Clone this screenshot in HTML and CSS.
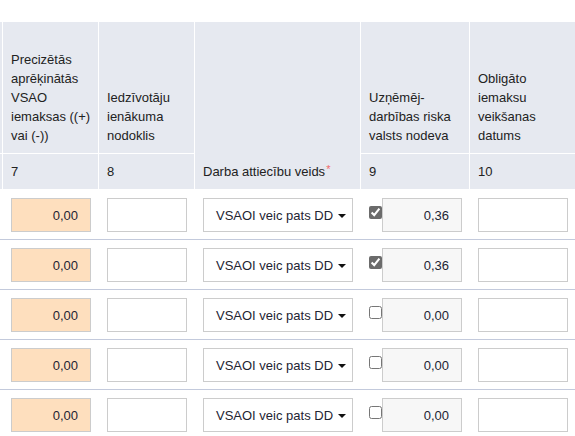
FILE: index.html
```html
<!DOCTYPE html>
<html lang="lv">
<head>
<meta charset="utf-8">
<title>VSAOI</title>
<link rel="stylesheet" href="styles.css">
</head>
<body>
<div class="wrap">
<table class="grid">
  <colgroup>
    <col class="c0"><col class="c1"><col class="c2"><col class="c3"><col class="c4"><col class="c5">
  </colgroup>
  <thead>
    <tr class="head-top">
      <th></th>
      <th>Precizētās aprēķinātās VSAO iemaksas ((+) vai (-))</th>
      <th>Iedzīvotāju ienākuma nodoklis</th>
      <th rowspan="2">Darba attiecību veids<span class="req">*</span></th>
      <th>Uzņēmēj-darbības riska valsts nodeva</th>
      <th>Obligāto iemaksu veikšanas datums</th>
    </tr>
    <tr class="head-num">
      <th></th>
      <th>7</th>
      <th>8</th>
      <th>9</th>
      <th>10</th>
    </tr>
  </thead>
  <tbody>
    <tr>
      <td></td>
      <td><input class="field num peach" type="text" value="0,00"></td>
      <td><input class="field" type="text"></td>
      <td><div class="select"><span>VSAOI veic pats DD</span><i class="caret"></i></div></td>
      <td><div class="risk"><input class="check" type="checkbox" checked><input class="field num ro" type="text" value="0,36" readonly></div></td>
      <td><input class="field wide" type="text"></td>
    </tr>
    <tr>
      <td></td>
      <td><input class="field num peach" type="text" value="0,00"></td>
      <td><input class="field" type="text"></td>
      <td><div class="select"><span>VSAOI veic pats DD</span><i class="caret"></i></div></td>
      <td><div class="risk"><input class="check" type="checkbox" checked><input class="field num ro" type="text" value="0,36" readonly></div></td>
      <td><input class="field wide" type="text"></td>
    </tr>
    <tr>
      <td></td>
      <td><input class="field num peach" type="text" value="0,00"></td>
      <td><input class="field" type="text"></td>
      <td><div class="select"><span>VSAOI veic pats DD</span><i class="caret"></i></div></td>
      <td><div class="risk"><input class="check" type="checkbox"><input class="field num ro" type="text" value="0,00" readonly></div></td>
      <td><input class="field wide" type="text"></td>
    </tr>
    <tr>
      <td></td>
      <td><input class="field num peach" type="text" value="0,00"></td>
      <td><input class="field" type="text"></td>
      <td><div class="select"><span>VSAOI veic pats DD</span><i class="caret"></i></div></td>
      <td><div class="risk"><input class="check" type="checkbox"><input class="field num ro" type="text" value="0,00" readonly></div></td>
      <td><input class="field wide" type="text"></td>
    </tr>
    <tr>
      <td></td>
      <td><input class="field num peach" type="text" value="0,00"></td>
      <td><input class="field" type="text"></td>
      <td><div class="select"><span>VSAOI veic pats DD</span><i class="caret"></i></div></td>
      <td><div class="risk"><input class="check" type="checkbox"><input class="field num ro" type="text" value="0,00" readonly></div></td>
      <td><input class="field wide" type="text"></td>
    </tr>
  </tbody>
</table>
</div>
</body>
</html>
```

FILE: styles.css
```css
html, body {
  margin: 0;
  padding: 0;
  background: #fff;
  overflow: hidden;
}
body {
  font-family: "Liberation Sans", Arial, sans-serif;
  font-size: 13px;
  line-height: 19px;
  color: #222;
}
.wrap {
  padding-top: 22px;
}
.grid {
  table-layout: fixed;
  width: 577px;
  border-collapse: separate;
  border-spacing: 0;
}
.c0 { width: 3px; }
.c1 { width: 96px; }
.c2 { width: 96px; }
.c3 { width: 166px; }
.c4 { width: 109px; }
.c5 { width: 107px; }

.grid th {
  background: #e6e9f0;
  font-weight: normal;
  text-align: left;
  vertical-align: bottom;
  padding: 8px 7px 8px 8px;
  border-right: 1px solid #fff;
  border-bottom: 1px solid #fff;
  color: #222;
}
.grid th:first-child {
  padding: 0;
}
.head-top th {
  height: 115px;
}
.req {
  color: #f06a6a;
  font-size: 11px;
  vertical-align: 3px;
  line-height: 0;
  margin-left: 1px;
}

.grid td {
  padding: 8px 7px 7px 8px;
  border-bottom: 1px solid #c3cadc;
  vertical-align: top;
}
.grid td:first-child {
  padding: 0;
}

.field {
  display: block;
  box-sizing: border-box;
  width: 80px;
  height: 34px;
  margin: 0;
  border: 1px solid #ccc;
  border-radius: 0;
  background: #fff;
  font-family: "Liberation Sans", Arial, sans-serif;
  font-size: 13px;
  color: #1e2433;
  padding: 0 12px;
  outline: none;
}
.field.num { text-align: right; }
.field.peach { background: #fedfbe; }
.field.ro { background: #f7f7f7; }
.field.wide { width: 90px; }

.select {
  box-sizing: border-box;
  width: 150px;
  height: 34px;
  border: 1px solid #ccc;
  background: #fff;
  display: flex;
  align-items: center;
  justify-content: space-between;
  padding: 0 6px 0 12px;
  color: #1e2433;
}
.caret {
  width: 0;
  height: 0;
  border-left: 4px solid transparent;
  border-right: 4px solid transparent;
  border-top: 4px solid #111;
  margin-top: 1px;
}

.risk {
  display: flex;
  align-items: flex-start;
}
.check {
  width: 13px;
  height: 13px;
  margin: 8px 0 0 0;
  accent-color: #6b6b6b;
  flex: none;
}
```
